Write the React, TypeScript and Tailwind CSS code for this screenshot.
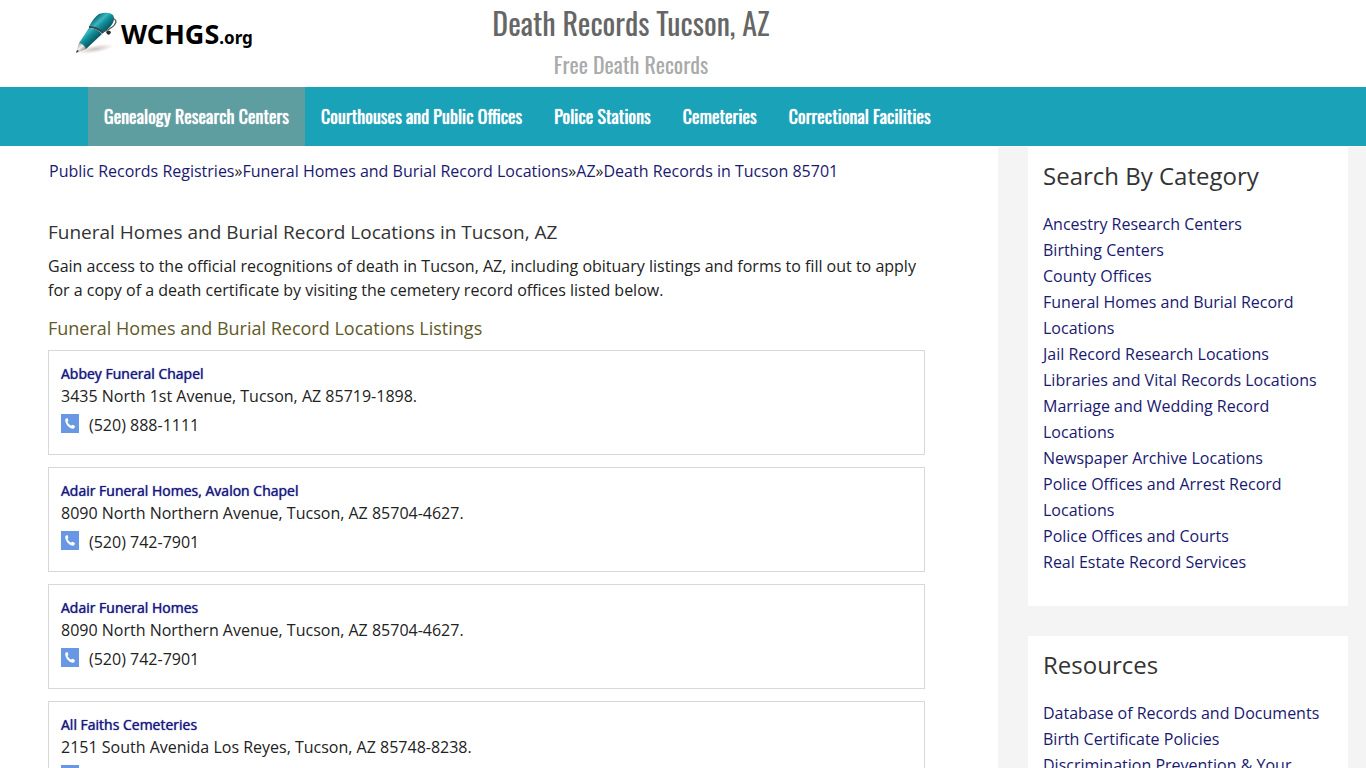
import React from "react";

const navItems = [
  "Genealogy Research Centers",
  "Courthouses and Public Offices",
  "Police Stations",
  "Cemeteries",
  "Correctional Facilities",
];

const crumbs = [
  "Public Records Registries",
  "Funeral Homes and Burial Record Locations",
  "AZ",
  "Death Records in Tucson 85701",
];

const listings = [
  { name: "Abbey Funeral Chapel", address: "3435 North 1st Avenue, Tucson, AZ 85719-1898.", phone: "(520) 888-1111" },
  { name: "Adair Funeral Homes, Avalon Chapel", address: "8090 North Northern Avenue, Tucson, AZ 85704-4627.", phone: "(520) 742-7901" },
  { name: "Adair Funeral Homes", address: "8090 North Northern Avenue, Tucson, AZ 85704-4627.", phone: "(520) 742-7901" },
  { name: "All Faiths Cemeteries", address: "2151 South Avenida Los Reyes, Tucson, AZ 85748-8238.", phone: "" },
];

const categories = [
  "Ancestry Research Centers",
  "Birthing Centers",
  "County Offices",
  "Funeral Homes and Burial Record Locations",
  "Jail Record Research Locations",
  "Libraries and Vital Records Locations",
  "Marriage and Wedding Record Locations",
  "Newspaper Archive Locations",
  "Police Offices and Arrest Record Locations",
  "Police Offices and Courts",
  "Real Estate Record Services",
];

const resources = [
  "Database of Records and Documents",
  "Birth Certificate Policies",
  "Discrimination Prevention & Your",
];

function PenIcon() {
  return (
    <svg width="46" height="44" viewBox="0 0 46 44" className="shrink-0" aria-hidden="true">
      <defs>
        <linearGradient id="barrel" gradientUnits="userSpaceOnUse" x1="13" y1="12" x2="26" y2="26">
          <stop offset="0" stopColor="#0a6a76" />
          <stop offset="0.3" stopColor="#3cb6bf" />
          <stop offset="0.5" stopColor="#11919c" />
          <stop offset="1" stopColor="#034650" />
        </linearGradient>
        <linearGradient id="tip" x1="0" y1="0" x2="1" y2="1">
          <stop offset="0" stopColor="#77716f" />
          <stop offset="0.45" stopColor="#f1efee" />
          <stop offset="1" stopColor="#57504e" />
        </linearGradient>
        <radialGradient id="shade">
          <stop offset="0" stopColor="#b9aaa4" stopOpacity="0.7" />
          <stop offset="1" stopColor="#b9aaa4" stopOpacity="0" />
        </radialGradient>
      </defs>
      <ellipse cx="20" cy="37" rx="19" ry="4" fill="url(#shade)" transform="rotate(-10 20 37)" />
      <path d="M1 41 4 31Q9 31 11 37Z" fill="url(#tip)" />
      <path d="M4 31 14 16Q22 16 27 22L11 37Q9 32 4 31Z" fill="url(#barrel)" />
      <path d="M14 15Q18 6 24 2Q34 -1 38 3Q41 8 35 15L28 21Q22 15 14 15Z" fill="url(#barrel)" />
      <path d="M14 15Q22 15 28 21" fill="none" stroke="#34494e" strokeWidth="1.8" />
      <path d="M37 6Q43 8 40 12Q38 16 28 20" fill="none" stroke="#50595c" strokeWidth="1.3" />
      <path d="M31 20Q34 17 36 20Q35 24 32 22Z" fill="#282d30" />
      <path d="M1 41 2 38 4 39Z" fill="#252323" />
    </svg>
  );
}

function PhoneIcon() {
  return (
    <svg width="18" height="19" viewBox="0 0 18 19" className="shrink-0" aria-hidden="true">
      <rect width="18" height="19" fill="#6897e3" />
      <path
        d="M5 4.5 6.4 4Q7.2 5.5 7.4 7L6.4 8Q7.6 10.5 10 11.8L11.2 10.8Q12.8 11.2 14 12.2Q13.6 14.8 11.8 14.7Q8.6 14.4 6.1 11.2Q3.8 7.5 4.2 5.5Q4.4 4.8 5 4.5Z"
        fill="#fff"
      />
    </svg>
  );
}

function SideCard({ title, links }: { title: string; links: string[] }) {
  return (
    <section className="bg-white px-[15px] pt-3 pb-[31px]">
      <h2 className="mb-[19px] text-2xl leading-[33px] text-[#333]">{title}</h2>
      <ul>
        {links.map((link) => (
          <li key={link} className="leading-[26px]">
            <a href="#" className="text-[#191970]">{link}</a>
          </li>
        ))}
      </ul>
    </section>
  );
}

export default function App() {
  return (
    <div className="h-screen overflow-hidden bg-white font-['Open_Sans',sans-serif] text-base text-[#222]">
      <header className="grid h-[87px] grid-cols-[272px_718px_1fr]">
        <a href="#" className="flex items-start pt-3 pl-[75px] text-black">
          <PenIcon />
          <span className="font-['Noto_Sans','Open_Sans',sans-serif] text-[27px] leading-[44px] font-bold">
            WCHGS<span className="text-[17px]">.org</span>
          </span>
        </a>
        <div className="text-center font-[Oswald,sans-serif]">
          <h1 className="pt-[3px] text-[30px] leading-10 text-[#666]">Death Records Tucson, AZ</h1>
          <p className="text-[22px] leading-[42px] text-[#aaa]">Free Death Records</p>
        </div>
      </header>

      <nav className="bg-[#19a2b8] pl-[88px] font-[Oswald,sans-serif] text-lg text-white [text-shadow:0_0_1px_#fff]">
        <ul className="flex">
          {navItems.map((item, i) => (
            <li key={item}>
              <a href="#" className={i === 0 ? "block bg-[#5f9ea0] px-4 leading-[59px]" : "block px-4 leading-[59px]"}>
                {item}
              </a>
            </li>
          ))}
        </ul>
      </nav>

      <div className="flex border-t border-white bg-[#f4f4f4]">
        <main className="min-w-0 flex-1 bg-white pr-[73px] pl-12">
          <div className="pt-3 pl-px leading-6">
            {crumbs.map((crumb, i) => (
              <React.Fragment key={crumb}>
                {i > 0 && "»"}
                <a href="#" className="text-[#191970]">{crumb}</a>
              </React.Fragment>
            ))}
          </div>

          <h2 className="mt-9 text-[19px] leading-[26px] text-[#333]">
            Funeral Homes and Burial Record Locations in Tucson, AZ
          </h2>
          <p className="mt-[9px] leading-6">
            Gain access to the official recognitions of death in Tucson, AZ, including obituary listings and forms to
            fill out to apply for a copy of a death certificate by visiting the cemetery record offices listed below.
          </p>
          <h3 className="mt-[13px] mb-[9px] text-lg leading-[26px] text-[#5f5a28]">
            Funeral Homes and Burial Record Locations Listings
          </h3>

          <ul className="flex flex-col gap-3">
            {listings.map((item) => (
              <li key={item.name} className="h-[105px] border border-[#d8d8d8] px-3 pt-3">
                <h4 className="text-sm leading-[22px] text-[#191980] [text-shadow:0_0_1px_#191980]">
                  <a href="#">{item.name}</a>
                </h4>
                <p className="leading-[22px]">{item.address}</p>
                <p className="flex items-start gap-2.5 pt-[7px] leading-[22px]">
                  <PhoneIcon />
                  {item.phone}
                </p>
              </li>
            ))}
          </ul>
        </main>

        <aside className="flex w-[368px] shrink-0 flex-col gap-[30px] pr-[18px] pl-[30px]">
          <SideCard title="Search By Category" links={categories} />
          <SideCard title="Resources" links={resources} />
        </aside>
      </div>
    </div>
  );
}
